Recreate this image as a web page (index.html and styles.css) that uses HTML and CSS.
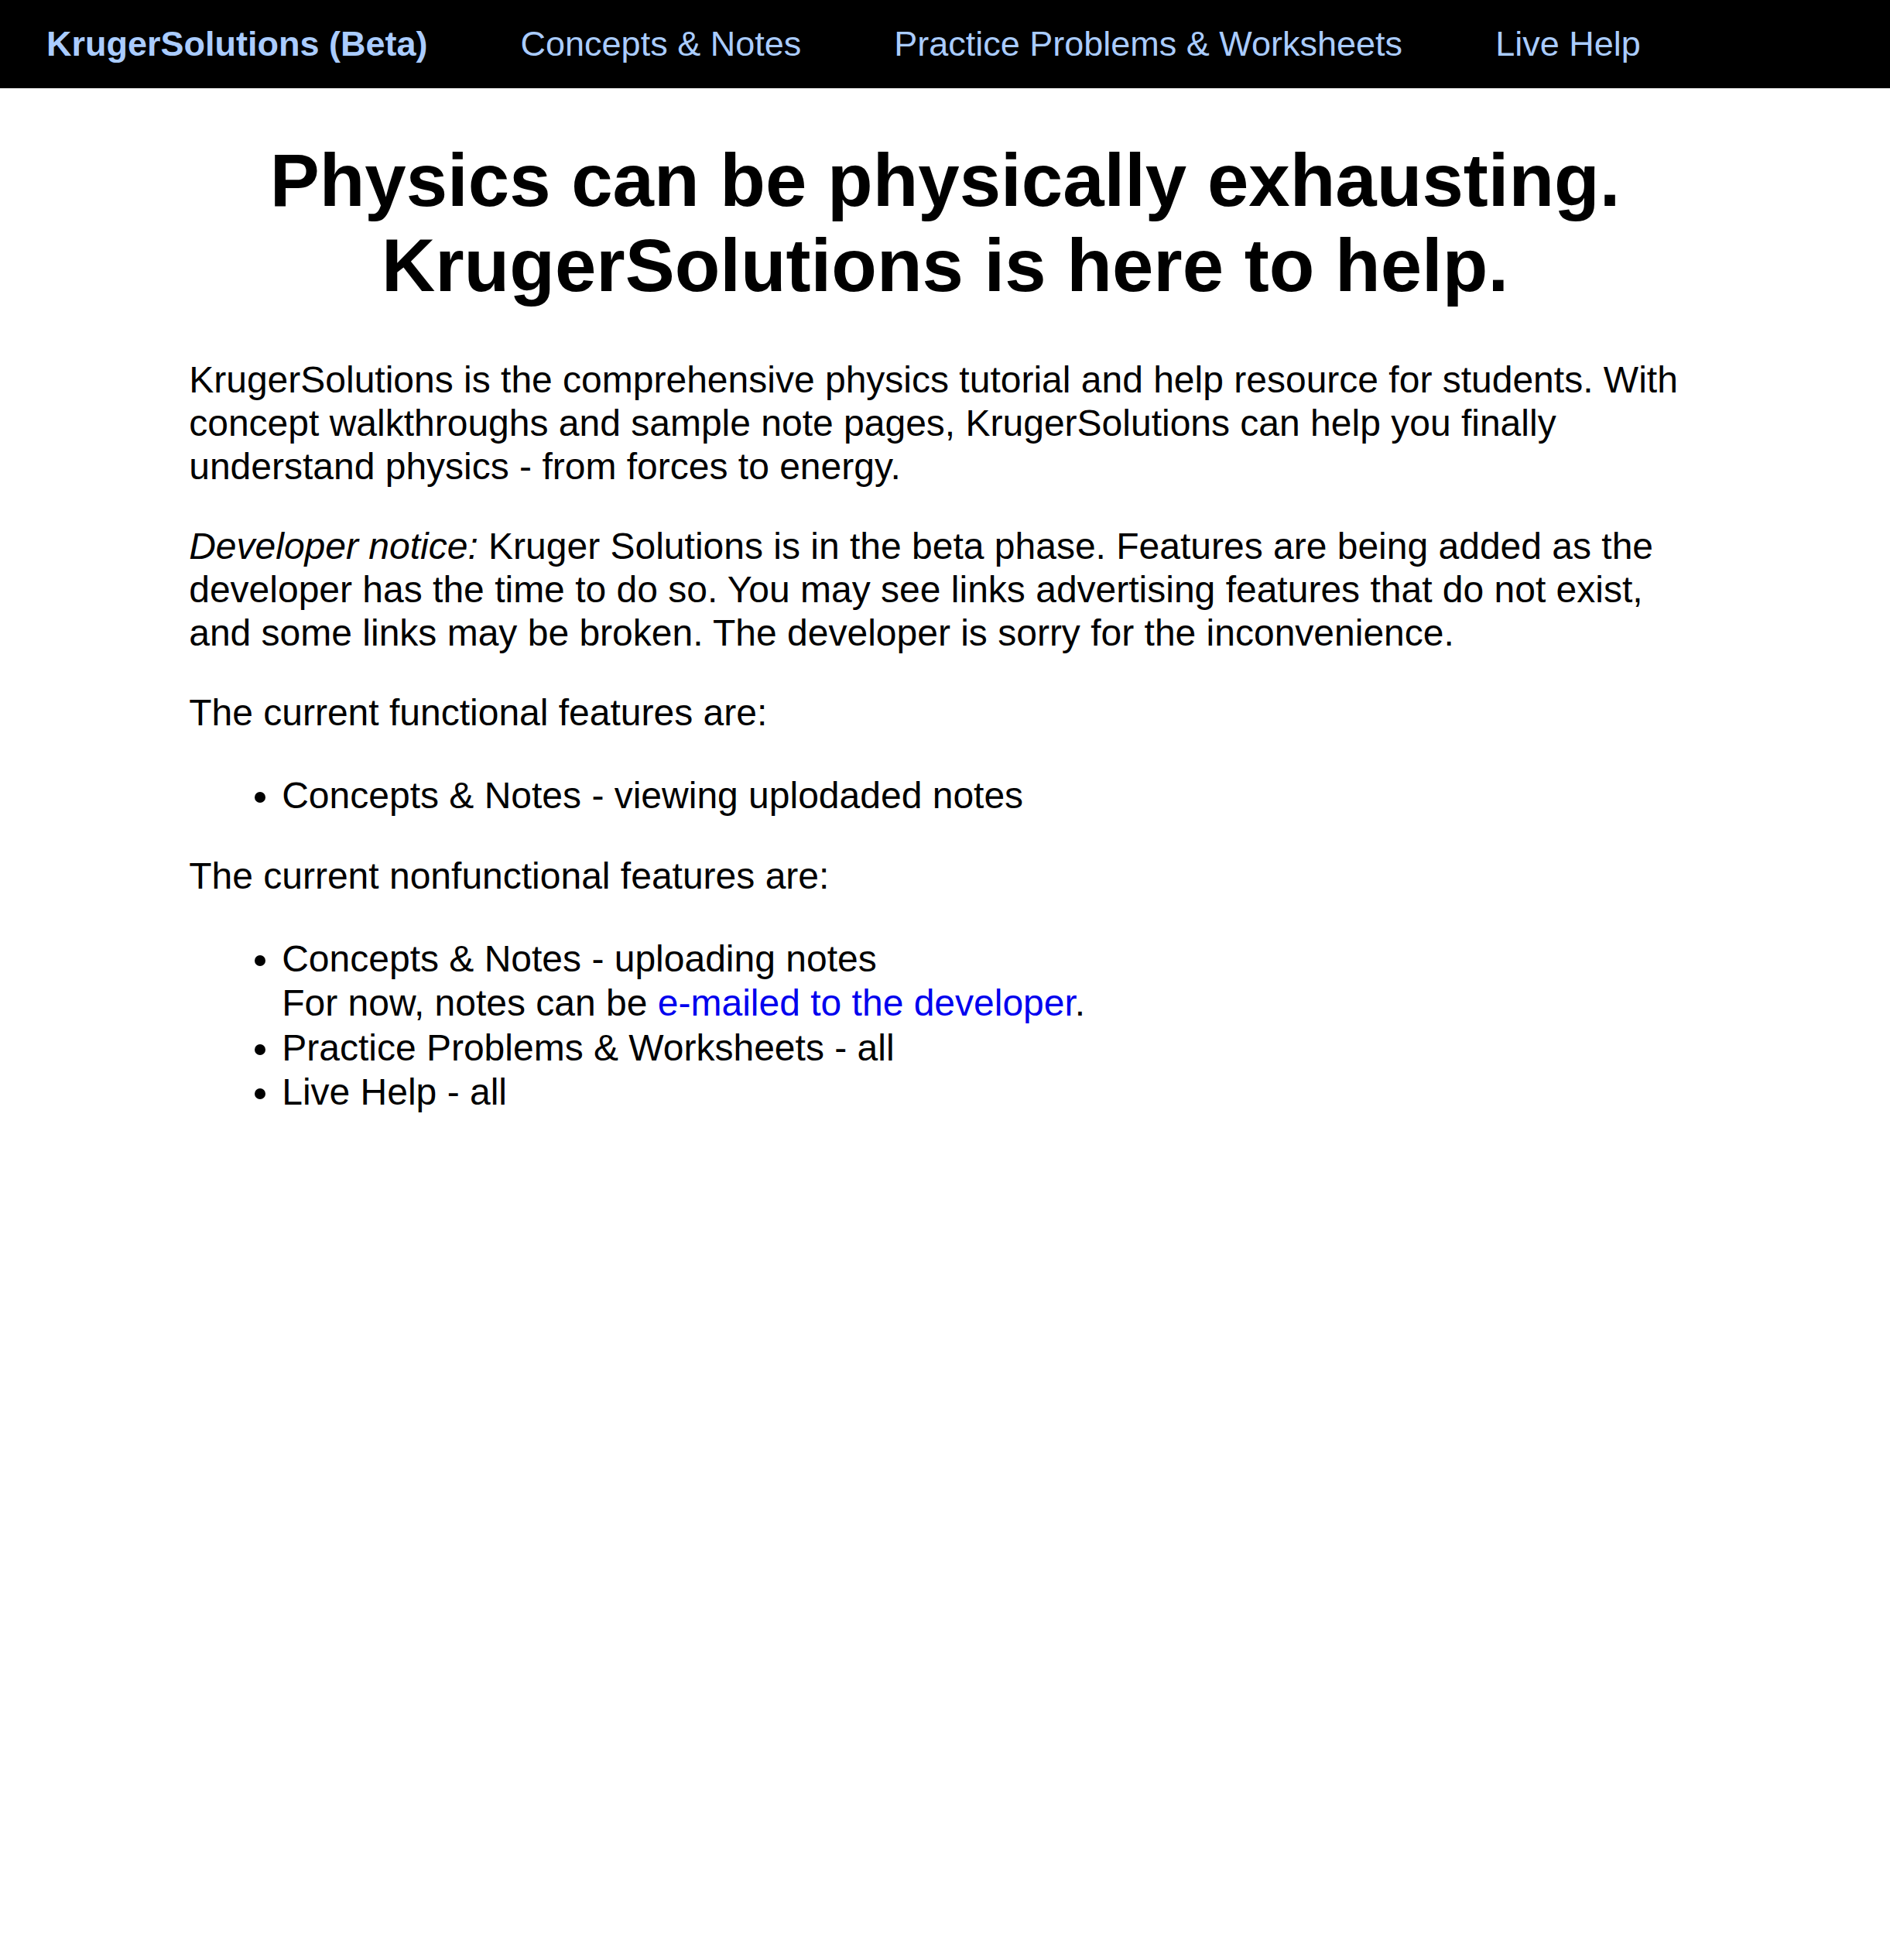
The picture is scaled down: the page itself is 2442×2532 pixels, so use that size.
FILE: index.html
```html
<!DOCTYPE html>
<html lang="en">
<head>
<meta charset="utf-8">
<title>KrugerSolutions (Beta)</title>
<link rel="stylesheet" href="styles.css">
</head>
<body>
<nav class="topnav">
  <a class="nav-link brand" href="#">KrugerSolutions (Beta)</a>
  <a class="nav-link" href="#">Concepts &amp; Notes</a>
  <a class="nav-link" href="#">Practice Problems &amp; Worksheets</a>
  <a class="nav-link" href="#">Live Help</a>
</nav>
<main class="content">
  <h1 class="headline">Physics can be physically exhausting. KrugerSolutions is here to help.</h1>
  <p class="text">KrugerSolutions is the comprehensive physics tutorial and help resource for students. With concept walkthroughs and sample note pages, KrugerSolutions can help you finally understand physics - from forces to energy.</p>
  <p class="text"><em class="notice">Developer notice:</em> Kruger Solutions is in the beta phase. Features are being added as the developer has the time to do so. You may see links advertising features that do not exist, and some links may be broken. The developer is sorry for the inconvenience.</p>
  <p class="text">The current functional features are:</p>
  <ul class="features">
    <li class="feature">Concepts &amp; Notes - viewing uplodaded notes</li>
  </ul>
  <p class="text">The current nonfunctional features are:</p>
  <ul class="features">
    <li class="feature">Concepts &amp; Notes - uploading notes<br>For now, notes can be <a class="mail-link" href="#">e-mailed to the developer</a>.</li>
    <li class="feature">Practice Problems &amp; Worksheets - all</li>
    <li class="feature">Live Help - all</li>
  </ul>
</main>
</body>
</html>
```

FILE: styles.css
```css
html, body {
  margin: 0;
  padding: 0;
  background: #ffffff;
}

body {
  font-family: "Liberation Sans", Arial, Helvetica, sans-serif;
  font-size: 48px;
  color: #000000;
}

.topnav {
  display: flex;
  align-items: center;
  background: #000000;
  padding: 31px 0;
}

.nav-link {
  font-size: 45px;
  color: #aaccff;
  text-decoration: none;
  padding: 0 60px;
}

.nav-link.brand {
  font-weight: bold;
}

.content {
  padding: 0 10%;
}

.headline {
  font-size: 96px;
  font-weight: bold;
  text-align: center;
  margin: 64px 0 65px;
}

.text {
  line-height: 56px;
  margin: 47px 0;
}

.notice {
  font-style: italic;
}

.features {
  margin: 50px 0 45px;
  padding-left: 120px;
}

.feature {
  line-height: 57.6px;
}

.mail-link {
  color: #0000ee;
  text-decoration: none;
}
```
